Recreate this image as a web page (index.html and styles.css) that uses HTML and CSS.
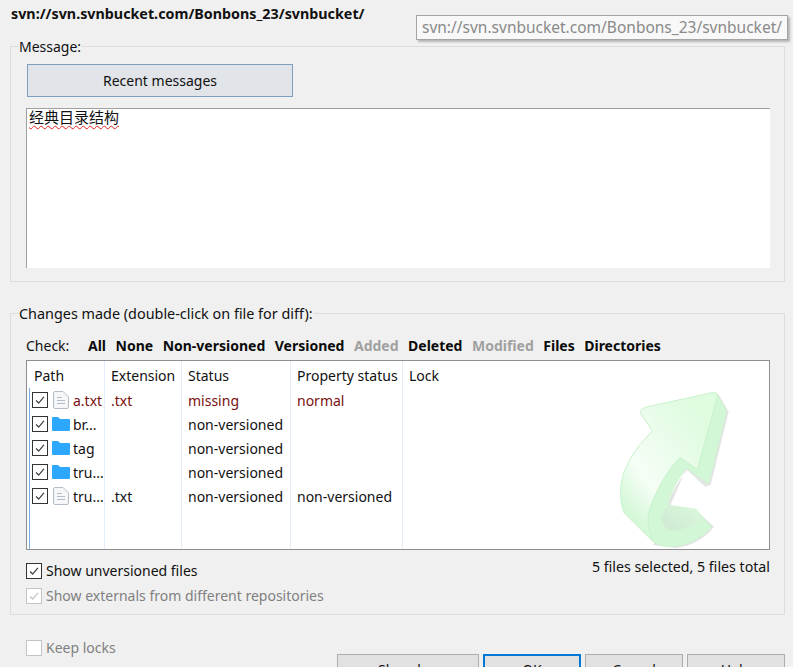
FILE: index.html
```html
<!DOCTYPE html>
<html lang="en">
<head>
  <meta charset="UTF-8" />
  <title>Import</title>
  <link rel="stylesheet" href="styles.css">
</head>
<body>
  <div class="repo-url">svn://svn.svnbucket.com/Bonbons_23/svnbucket/</div>
  <div class="tooltip">svn://svn.svnbucket.com/Bonbons_23/svnbucket/</div>

  <fieldset class="group message-group">
    <legend>Message:</legend>
    <button type="button" class="recent-btn">Recent messages</button>
    <div class="message-box"><span class="misspelled">经典目录结构</span></div>
  </fieldset>

  <fieldset class="group changes-group">
    <legend class="wide-legend">Changes made (double-click on file for diff):</legend>
    <div class="check-row">
      <span class="check-label">Check:</span>
      <a>All</a>
      <a>None</a>
      <a>Non-versioned</a>
      <a>Versioned</a>
      <a class="off">Added</a>
      <a>Deleted</a>
      <a class="off">Modified</a>
      <a>Files</a>
      <a>Directories</a>
    </div>

    <div class="file-list">
      <table>
        <thead>
          <tr><th class="col-path">Path</th><th class="col-ext">Extension</th><th class="col-status">Status</th><th class="col-prop">Property status</th><th>Lock</th></tr>
        </thead>
        <tbody>
          <tr class="missing">
            <td><div class="path-cell"><span class="box checked"><svg viewBox="0 0 16 16"><path d="M3.5 8.5 6.5 11.5 12.5 4.5"/></svg></span><svg class="ico ico-doc" viewBox="0 0 16 18"><path class="doc" d="M2 .5h8l5.500 5.500v10a1.500 1.500 0 0 1-1.500 1.500h-12a1.500 1.500 0 0 1-1.500-1.500v-14a1.500 1.500 0 0 1 1.500-1.500z"/><path class="doc-lines" d="M4 6.500h5M4 9.500h8M4 12.500h8"/></svg><span class="name">a.txt</span></div></td>
            <td>.txt</td><td>missing</td><td>normal</td><td></td>
          </tr>
          <tr>
            <td><div class="path-cell"><span class="box checked"><svg viewBox="0 0 16 16"><path d="M3.5 8.5 6.5 11.5 12.500 4.500"/></svg></span><svg class="ico ico-folder" viewBox="0 0 18 14"><path class="folder" d="M0 1a1 1 0 0 1 1-1h5l2 2h9a1 1 0 0 1 1 1v10a1 1 0 0 1-1 1h-16a1 1 0 0 1-1-1z"/></svg><span class="name">br...</span></div></td>
            <td></td><td>non-versioned</td><td></td><td></td>
          </tr>
          <tr>
            <td><div class="path-cell"><span class="box checked"><svg viewBox="0 0 16 16"><path d="M3.5 8.5 6.5 11.5 12.500 4.500"/></svg></span><svg class="ico ico-folder" viewBox="0 0 18 14"><path class="folder" d="M0 1a1 1 0 0 1 1-1h5l2 2h9a1 1 0 0 1 1 1v10a1 1 0 0 1-1 1h-16a1 1 0 0 1-1-1z"/></svg><span class="name">tag</span></div></td>
            <td></td><td>non-versioned</td><td></td><td></td>
          </tr>
          <tr>
            <td><div class="path-cell"><span class="box checked"><svg viewBox="0 0 16 16"><path d="M3.5 8.5 6.5 11.5 12.500 4.500"/></svg></span><svg class="ico ico-folder" viewBox="0 0 18 14"><path class="folder" d="M0 1a1 1 0 0 1 1-1h5l2 2h9a1 1 0 0 1 1 1v10a1 1 0 0 1-1 1h-16a1 1 0 0 1-1-1z"/></svg><span class="name">tru...</span></div></td>
            <td></td><td>non-versioned</td><td></td><td></td>
          </tr>
          <tr>
            <td><div class="path-cell"><span class="box checked"><svg viewBox="0 0 16 16"><path d="M3.5 8.5 6.5 11.5 12.500 4.500"/></svg></span><svg class="ico ico-doc" viewBox="0 0 16 18"><path class="doc" d="M2 .5h8l5.500 5.500v10a1.500 1.500 0 0 1-1.500 1.500h-12a1.500 1.500 0 0 1-1.500-1.500v-14a1.500 1.500 0 0 1 1.500-1.500z"/><path class="doc-lines" d="M4 6.500h5M4 9.500h8M4 12.500h8"/></svg><span class="name">tru...</span></div></td>
            <td>.txt</td><td>non-versioned</td><td>non-versioned</td><td></td>
          </tr>
          <tr class="filler"><td></td><td></td><td></td><td></td><td></td></tr>
        </tbody>
      </table>

      <!-- faded commit arrow painted over the list background -->
      <svg class="watermark" viewBox="0 0 570 570">
        <defs>
          <linearGradient id="faceFill" x1="0.1" y1="0.8" x2="0.7" y2="0.1">
            <stop offset="0" stop-color="#d6f8d9"/>
            <stop offset="0.3" stop-color="#f6fef6"/>
            <stop offset="1" stop-color="#dffbe0"/>
          </linearGradient>
          <linearGradient id="innerFill" x1="0" y1="1" x2="1" y2="0.2">
            <stop offset="0" stop-color="#cfe8d2"/>
            <stop offset="1" stop-color="#d9f8dc"/>
          </linearGradient>
        </defs>
        <path class="arrow-shadow" d="M385 72 416 125 362 345 345 350 292 300 Q250 350 232 405 L318 420 372 470 Q330 525 255 534 L190 525 Z"/>
        <path class="arrow-side" d="M378 68 410 122 356 342 290 295 Q248 345 232 405 L318 418 364 470 Q320 522 250 530 Q210 532 190 515 L100 425 Z"/>
        <path class="arrow-inner" d="M232 405 Q222 420 212 445 Q225 490 260 482 Q310 470 342 450 L318 418 Z"/>
        <path class="arrow-face" d="M150 128 Q152 116 165 112 L365 68 Q385 66 382 82 L322 298 270 262 Q205 330 175 430 Q170 480 190 515 L102 428 Q90 400 92 350 Q100 270 187 182 Z"/>
      </svg>
    </div>

    <div class="options">
      <div class="option-list">
        <label class="option"><span class="box checked"><svg viewBox="0 0 16 16"><path d="M3.5 8.5 6.5 11.5 12.500 4.500"/></svg></span>Show unversioned files</label>
        <label class="option disabled"><span class="box checked"><svg viewBox="0 0 16 16"><path d="M3.5 8.5 6.5 11.5 12.500 4.500"/></svg></span>Show externals from different repositories</label>
      </div>
      <div class="file-count">5 files selected, 5 files total</div>
    </div>
  </fieldset>

  <label class="option disabled keep-locks"><span class="box blank"></span>Keep locks</label>

  <div class="actions">
    <button type="button">Show log</button>
    <button type="button" class="default">OK</button>
    <button type="button">Cancel</button>
    <button type="button">Help</button>
  </div>
</body>
</html>
```

FILE: styles.css
```css
html, body {
  height: 667px;
  overflow: hidden;
}
body {
  position: relative;
  margin: 0;
  padding: 0 8px 0 10px;
  background: #f0f0f0;
  color: #111;
  font-family: "Noto Sans", "Noto Sans CJK SC", sans-serif;
  font-size: 14px;
}

.repo-url {
  padding: 4px 0 0 1px;
  height: 26px;
  font-weight: 700;
  font-size: 14.3px;
  line-height: 20px;
  white-space: nowrap;
}
.tooltip {
  position: absolute;
  left: 416px;
  top: 15px;
  width: 370px;
  height: 23px;
  border: 1px solid #a4a4a4;
  box-shadow: 2px 2px 2px #b5b5b5;
  background: #f8f8f8;
  color: #8a8a8a;
  font-size: 15.5px;
  line-height: 23px;
  text-align: center;
  white-space: nowrap;
}

/* group boxes */
.group {
  margin: 0;
  padding: 0 15px 0 16px;
  border: 1px solid #dcdcdc;
  box-sizing: border-box;
  min-width: 0;
}
.group legend {
  padding: 0 1px 0 0;
  margin-left: -8px;
  line-height: 17px;
  background: #f0f0f0;
}
.group .wide-legend {
  font-size: 14.4px;
}
.message-group {
  margin-top: 8px;
  height: 244px;
}
.changes-group {
  margin-top: 23px;
  height: 310px;
}

.recent-btn {
  display: block;
  width: 266px;
  height: 33px;
  margin: 9px 0 11px 0;
  border: 1px solid #7ea0bd;
  background: #e1e4e8;
  color: #111;
  font: inherit;
}
.message-box {
  width: 744px;
  height: 160px;
  margin-left: -1px;
  border: 1px solid #a0a0a0;
  border-width: 1px 0 0 1px;
  background: #fff;
  font-size: 15px;
  line-height: 17px;
  padding-left: 2px;
  box-sizing: border-box;
}
.misspelled {
  text-decoration: underline wavy #e02020 1px;
  text-underline-offset: 2px;
}

.check-row {
  display: flex;
  align-items: center;
  gap: 9.5px;
  height: 22px;
  margin-top: 12px;
  margin-left: -1px;
  white-space: nowrap;
}
.check-row a {
  font-weight: 700;
  color: #0b0b0b;
}
.check-row a.off {
  color: #a0a0a0;
}
.check-label {
  width: 52.5px;
}

/* file list */
.file-list {
  position: relative;
  width: 744px;
  height: 190px;
  margin-top: 4px;
  margin-left: -1px;
  box-sizing: border-box;
  border: 1px solid #8f8f8f;
  background: #fff;
  overflow: hidden;
}
.file-list::before {
  content: "";
  position: absolute;
  z-index: 2;
  left: 2px;
  top: 27px;
  bottom: 0;
  width: 1px;
  background: #7aaee0;
}
.file-list table {
  position: relative;
  z-index: 1;
  width: 100%;
  height: 188px;
  border-collapse: collapse;
  table-layout: fixed;
}
.file-list th {
  height: 25px;
  padding: 2px 0 0 6px;
  font-weight: 400;
  text-align: left;
  border-right: 1px solid #e3eef9;
}
.file-list th:last-child,
.file-list td:last-child {
  border-right: none;
}
.file-list th:first-child {
  padding-left: 7px;
}
.file-list td {
  height: 24px;
  padding: 0 0 0 6px;
  border-right: 1px solid #e3eef9;
  white-space: nowrap;
}
.file-list td:first-child {
  padding-left: 5px;
}
.col-path { width: 70px; }
.col-ext { width: 70px; }
.col-status { width: 102px; }
.col-prop { width: 105px; }
.file-list tr.filler td {
  height: auto;
}
.missing td {
  color: #7a0f0f;
}
.path-cell {
  display: flex;
  align-items: center;
}
.ico {
  display: block;
  flex: none;
}
.ico-doc {
  width: 16px;
  height: 18px;
  margin: 0 4px 0 5px;
}
.ico-folder {
  width: 18px;
  height: 14px;
  margin: 0 3px 0 4px;
}
.doc {
  fill: #f6f7f9;
  stroke: #b4bcc6;
}
.doc-lines {
  fill: none;
  stroke: #b4bcc6;
}
.folder {
  fill: #2ea8ff;
}

.watermark {
  position: absolute;
  left: 563px;
  top: 9px;
  width: 190px;
  height: 190px;
  filter: blur(0.6px);
}
.arrow-shadow {
  fill: #d6dbd6;
  opacity: 0.7;
}
.arrow-side {
  fill: #d2f7d6;
  stroke: #cdf2d1;
  stroke-width: 2;
}
.arrow-inner {
  fill: url(#innerFill);
}
.arrow-face {
  fill: url(#faceFill);
  stroke: #c8f2cc;
  stroke-width: 3;
}

/* check boxes */
.box {
  display: block;
  flex: none;
  width: 16px;
  height: 16px;
  box-sizing: border-box;
  border: 1px solid #333;
  background: #fff;
}
.box svg {
  display: block;
  width: 14px;
  height: 14px;
}
.box path {
  fill: none;
  stroke: #444;
  stroke-width: 1.5;
}
.option {
  display: flex;
  align-items: center;
  gap: 4px;
  height: 25px;
}
.option.disabled {
  color: #808080;
}
.option.disabled .box {
  border-color: #c4c4c4;
}
.option.disabled .box path {
  stroke: #c4c4c4;
}
.options {
  display: flex;
  justify-content: space-between;
  align-items: flex-start;
  margin-top: 9px;
  margin-left: -1px;
  width: 744px;
}
.option-list {
  margin-top: -1px;
}
.file-count {
  margin-top: -1px;
  font-size: 14.2px;
  line-height: 18px;
}
.keep-locks {
  margin-top: 20px;
  margin-left: 16px;
}

.actions {
  display: flex;
  justify-content: flex-end;
  gap: 4px;
  margin-top: -6px;
}
.actions button {
  width: 98px;
  height: 30px;
  border: 1px solid #adadad;
  background: #e1e1e1;
  color: #111;
  font: inherit;
}
.actions button:first-child {
  width: 142px;
}
.actions .default {
  border: 2px solid #0078d7;
}
```
